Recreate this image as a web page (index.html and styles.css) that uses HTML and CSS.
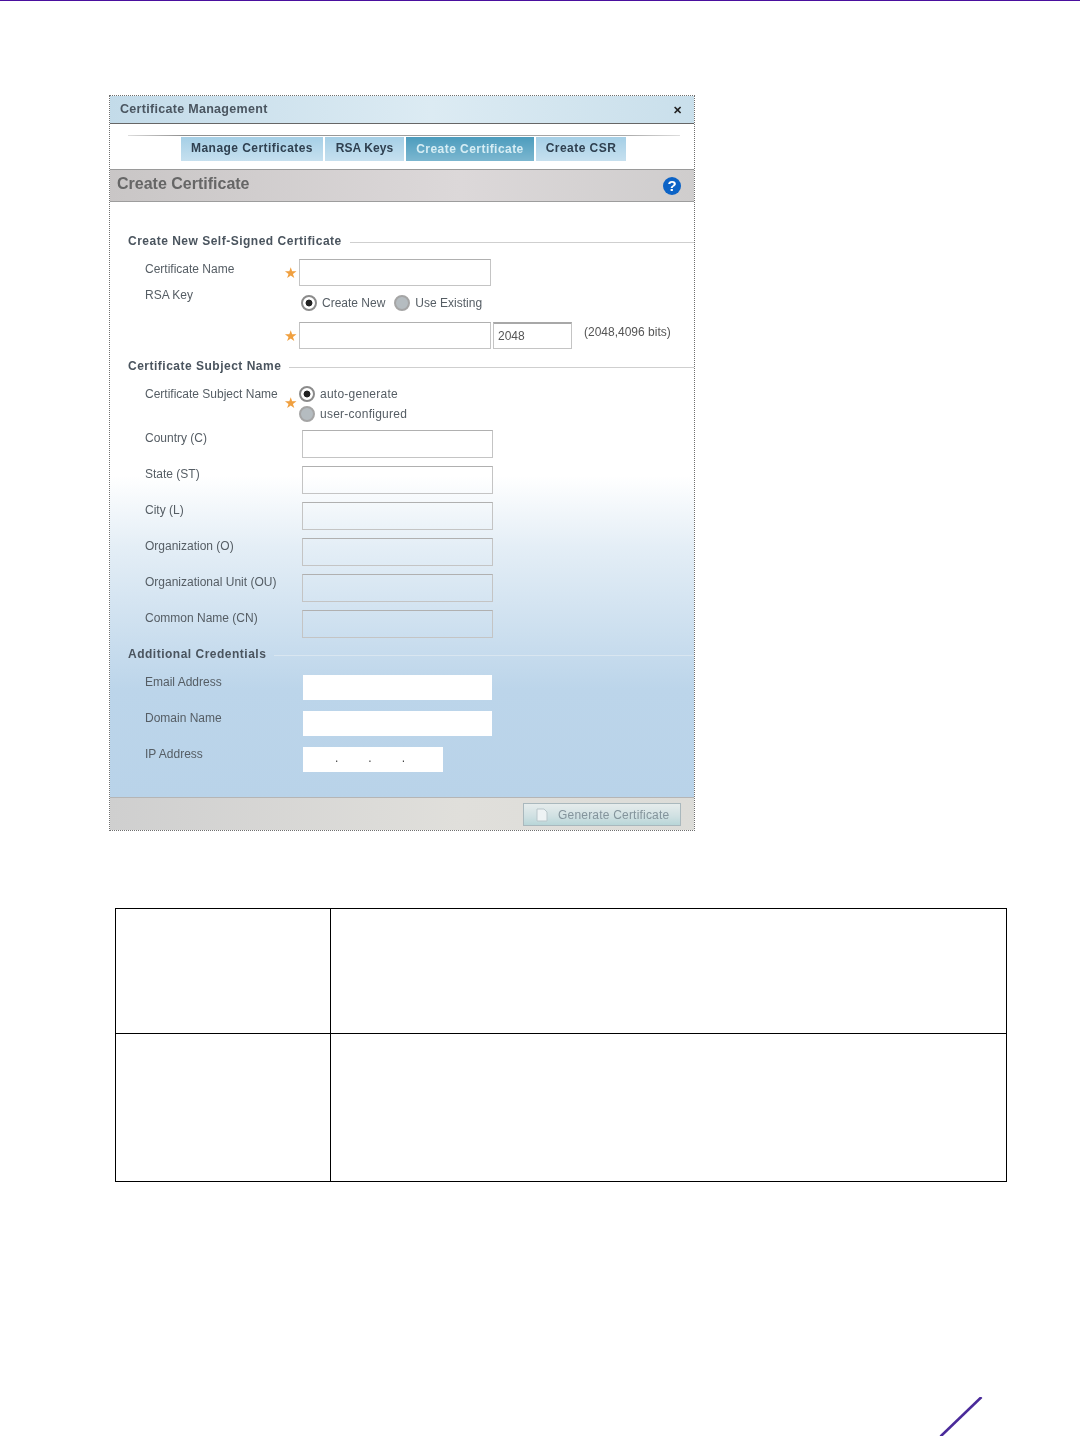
FILE: index.html
```html
<!DOCTYPE html>
<html lang="en">
<head>
<meta charset="utf-8">
<title>Create Certificate</title>
<link rel="stylesheet" href="styles.css">
</head>
<body>
<div class="top-rule"></div>
<section class="dialog">
  <header class="titlebar"><span class="title">Certificate Management</span><span class="close">✕</span></header>
  <div class="tabs-wrap">
    <div class="tabs-rule"></div>
    <nav class="tabs">
      <span class="tab t1">Manage Certificates</span>
      <span class="tab t2">RSA Keys</span>
      <span class="tab t3 active">Create Certificate</span>
      <span class="tab t4">Create CSR</span>
    </nav>
  </div>
  <div class="head"><span class="head-text">Create Certificate</span><span class="help">?</span></div>
  <div class="body">
    <div class="legend"><span>Create New Self-Signed Certificate</span><i></i></div>
    <div class="row r-name">
      <span class="label">Certificate Name</span><span class="star">★</span><span class="input w-a"></span>
    </div>
    <div class="row r-rsa">
      <span class="label">RSA Key</span><span class="star"></span>
      <div class="radios-inline">
        <span class="radio on"></span><span class="rtext">Create New</span>
        <span class="radio"></span><span class="rtext">Use Existing</span>
      </div>
    </div>
    <div class="row r-key">
      <span class="label"></span><span class="star">★</span><span class="input w-a"></span><span class="input w-size">2048</span><span class="note">(2048,4096 bits)</span>
    </div>
    <div class="legend l2"><span>Certificate Subject Name</span><i></i></div>
    <div class="row r-subject">
      <span class="label">Certificate Subject Name</span><span class="star">★</span>
      <div class="radios-stack">
        <div class="ritem"><span class="radio on"></span><span class="rtext">auto-generate</span></div>
        <div class="ritem"><span class="radio"></span><span class="rtext">user-configured</span></div>
      </div>
    </div>
    <div class="fields">
      <div class="field"><span class="label">Country (C)</span><span class="input w-b"></span></div>
      <div class="field"><span class="label">State (ST)</span><span class="input w-b"></span></div>
      <div class="field"><span class="label">City (L)</span><span class="input w-b"></span></div>
      <div class="field"><span class="label">Organization (O)</span><span class="input w-b"></span></div>
      <div class="field"><span class="label">Organizational Unit (OU)</span><span class="input w-b"></span></div>
      <div class="field"><span class="label">Common Name (CN)</span><span class="input w-b"></span></div>
    </div>
    <div class="legend l3"><span>Additional Credentials</span><i></i></div>
    <div class="creds">
      <div class="cred"><span class="label">Email Address</span><span class="white w-c"></span></div>
      <div class="cred"><span class="label">Domain Name</span><span class="white w-c"></span></div>
      <div class="cred"><span class="label">IP Address</span><span class="white w-ip"><b>.</b><b>.</b><b>.</b></span></div>
    </div>
  </div>
  <footer class="foot">
    <span class="btn"><svg class="btn-ico" viewBox="0 0 12 14" width="12" height="14"><path d="M1 1h7l3 3v9H1z" fill="#eef3f4" stroke="#b9c6ca" stroke-width="1"/></svg><span>Generate Certificate</span></span>
  </footer>
</section>
<table class="grid">
  <tr class="tr1"><td class="c1"></td><td></td></tr>
  <tr class="tr2"><td class="c1"></td><td></td></tr>
</table>
<svg class="slash" viewBox="0 0 60 40" width="60" height="40"><path d="M42.500 0 L1.500 39.500" stroke="#4a2a9a" stroke-width="2.600" fill="none"/></svg>
</body>
</html>
```
FILE: styles.css
```css
html, body { margin: 0; padding: 0; background: #fff; }
body { width: 1080px; height: 1436px; overflow: hidden; font-family: "Liberation Sans", Arial, sans-serif; }
.top-rule { height: 1px; background: #4a0f9e; }

.dialog { width: 584px; margin: 94px 0 0 109px; border: 1px dotted #6f6f6f; filter: blur(0.6px); color: #555; }

.titlebar { border-bottom: 1px solid #666; background: linear-gradient(90deg, #c3dbe9, #dcebf3 55%, #c9dfeb); display: flex; align-items: center; justify-content: space-between; padding: 0 12px 2px 10px; box-sizing: content-box; height: 25px; }
.title { font-size: 12.500px; font-weight: 700; color: #4a5560; letter-spacing: .3px; }
.close { font-size: 11px; font-weight: 700; color: #222; margin-top: 3px; }

.tabs-wrap { height: 45px; box-sizing: border-box; padding-top: 11px; background: #fff; }
.tabs-rule { height: 1px; margin: 0 14px 0 18px; background: linear-gradient(90deg, #ddd, #8f8f8f 10%, #aaa 90%, #ddd); }
.tabs { display: flex; gap: 2px; padding: 1px 0 0 71px; }
.tab { height: 24px; line-height: 22px; text-align: center; font-size: 12px; font-weight: 700; color: #2f4050; background: linear-gradient(180deg, #a5cfe6, #c6e0ef); letter-spacing: .45px; white-space: nowrap; }
.t1 { width: 142px; }
.t2 { width: 79px; letter-spacing: .1px; }
.t3 { width: 128px; }
.t4 { width: 90px; }
.tab.active { color: #d6edf4; background: linear-gradient(180deg, #4c9cbd, #7cb7d0); line-height: 25px; }

.head { box-sizing: border-box; height: 33px; border-top: 1px solid #9a9a9a; border-bottom: 1px solid #9d9d9d; background: linear-gradient(90deg, #c9c6c6, #dcd8d9 60%, #cfcdcd); display: flex; align-items: center; justify-content: space-between; padding: 0 12px 3px 7px; }
.head-text { font-size: 16px; font-weight: 700; color: #666; }
.help { width: 18px; height: 18px; border-radius: 50%; background: #0c63c6; color: #fff; font-size: 15px; font-weight: 700; line-height: 18px; text-align: center; margin-top: 3px; margin-right: 1px; }

.body { height: 564px; padding: 31px 0 0 0; background: linear-gradient(180deg, #fff 0, #fff 46%, #e4eef6 58%, #bcd5ea 82%, #b9d3e9 100%); }

.legend { display: flex; align-items: center; gap: 8px; height: 16px; padding-left: 18px; font-size: 12px; font-weight: 700; color: #4a545e; letter-spacing: .5px; }
.legend i { flex: 1; height: 1px; background: #cfcfcf; margin-top: 3px; }
.l2 { margin-top: 9px; }
.l3 { margin-top: 8px; }
.l3 i { background: #d9e6f0; }

.label { display: block; font-size: 12px; line-height: 20px; color: #555d64; padding-left: 35px; white-space: nowrap; }
.row { display: grid; grid-template-columns: 175px 14px auto; justify-content: start; }
.star { color: #f0a040; font-size: 15px; line-height: 27px; margin-left: -1px; }
.input { display: block; box-sizing: border-box; height: 27px; border: 1px solid #c4c4c4; border-top-color: #b0b0b0; background: #fff; font-size: 12px; color: #555; line-height: 25px; padding-left: 4px; }
.w-a { width: 192px; }
.w-size { width: 79px; border-top: 2px solid #a8a8a8; margin-left: 2px; line-height: 24px; }
.w-b { width: 191px; height: 28px; background: transparent; }

.r-name { margin-top: 10px; height: 27px; }
.r-rsa { margin-top: -1px; height: 37px; }
.r-key { grid-template-columns: 175px 14px auto auto auto; height: 27px; }
.note { font-size: 12px; color: #555; margin-left: 12px; line-height: 20px; }

.radio { display: inline-block; box-sizing: border-box; width: 16px; height: 16px; border-radius: 50%; border: 2px solid #a5a5a5; background: #b5bcc0; flex: none; }
.radio.on { background: radial-gradient(circle, #222 0 3px, #fff 3.800px); border-color: #8b8b8b; }
.rtext { font-size: 12px; color: #555d64; }
.radios-inline { display: flex; align-items: center; height: 20px; margin: 8px 0 0 2px; }
.radios-inline .rtext { margin: 0 9px 0 5px; }
.r-subject { margin-top: 10px; height: 46px; }
.r-subject .star { line-height: 38px; }
.radios-stack { display: flex; flex-direction: column; gap: 2px; }
.ritem { display: flex; align-items: center; gap: 5px; height: 16px; margin-top: 2px; }
.ritem .rtext { letter-spacing: .25px; }

.fields { display: flex; flex-direction: column; gap: 8px; }
.field { display: grid; grid-template-columns: 192px 191px; height: 28px; }
.field .label { margin-top: -2px; }

.creds { display: flex; flex-direction: column; gap: 11px; margin-top: 13px; }
.cred { display: grid; grid-template-columns: 193px auto; justify-content: start; height: 25px; }
.cred .label { margin-top: -3px; }
.white { display: flex; height: 25px; background: #fff; }
.w-c { width: 189px; }
.w-ip { width: 140px; gap: 30px; padding-left: 32px; box-sizing: border-box; font-size: 12px; color: #444; line-height: 22px; }
.w-ip b { font-weight: 400; }

.foot { height: 33px; border-top: 1px solid #b5b5b5; background: linear-gradient(90deg, #cfcfcf, #e0dfdb 60%, #dcdcd8); display: flex; justify-content: flex-end; padding: 5px 13px 0 0; box-sizing: border-box; }
.btn { box-sizing: border-box; width: 158px; height: 23px; border: 1px solid #a9b8bd; background: linear-gradient(180deg, #e6ecec, #cfe0e2 60%, #b8d6d8); display: flex; align-items: center; gap: 10px; padding-left: 12px; font-size: 12px; color: #84949c; letter-spacing: .2px; }
.btn-ico { flex: none; }

.grid { border-collapse: collapse; table-layout: fixed; width: 892px; margin: 77px 0 0 115px; }
.grid td { border: 1px solid #000; padding: 0; }
.grid .c1 { width: 214px; }
.tr1 { height: 125px; }
.tr2 { height: 148px; }

.slash { display: block; margin: 215px 0 0 939px; }
```
